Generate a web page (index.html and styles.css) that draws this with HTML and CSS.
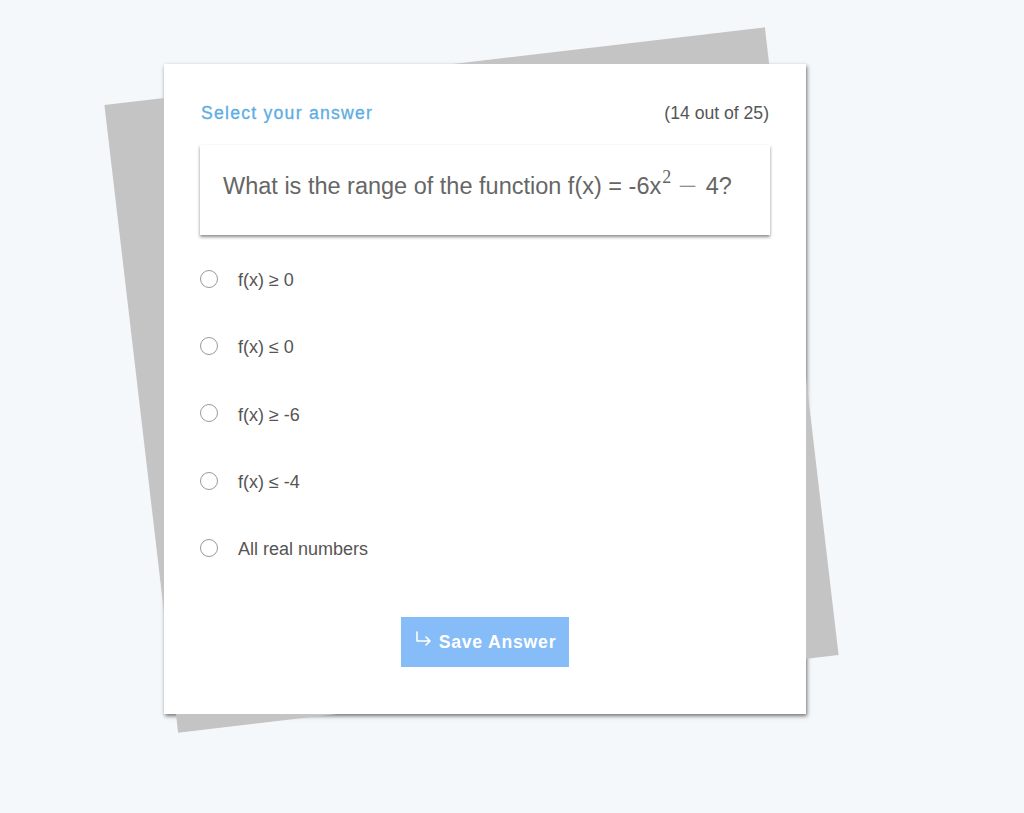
FILE: index.html
```html
<!DOCTYPE html>
<html>
<head>
<meta charset="utf-8">
<link rel="stylesheet" href="styles.css">
</head>
<body>
<div class="stage">
  <div class="card">
    <div class="head">
      <span class="title">Select your answer</span>
      <span class="count">(14 out of 25)</span>
    </div>
    <div class="question">What is the range of the function f(x) = -6x<sup class="math">2</sup><span class="minus">−</span>4?</div>
    <ul class="options">
      <li class="option"><span class="radio"></span><span>f(x) ≥ 0</span></li>
      <li class="option"><span class="radio"></span><span>f(x) ≤ 0</span></li>
      <li class="option"><span class="radio"></span><span>f(x) ≥ -6</span></li>
      <li class="option"><span class="radio"></span><span>f(x) ≤ -4</span></li>
      <li class="option"><span class="radio"></span><span>All real numbers</span></li>
    </ul>
    <div class="actions">
      <button class="save"><svg class="icon" width="19" height="17" viewBox="0 0 19 17"><path d="M3 1V10H16M12 6L16 10L12 14" fill="none" stroke="#fff" stroke-width="1.6" stroke-linecap="round" stroke-linejoin="round"/></svg><span>Save Answer</span></button>
    </div>
  </div>
</div>
</body>
</html>
```
FILE: styles.css
```css
html, body {
  margin: 0;
  padding: 0;
  background: #f5f8fb;
}
body {
  font-family: "Liberation Sans", Arial, sans-serif;
  color: #555;
  height: 813px;
  overflow: hidden;
}
.stage {
  padding: 64px 0 0 164px;
}
.card {
  position: relative;
  width: 642px;
  height: 650px;
  box-sizing: border-box;
  background: #fff;
  padding: 36px 36px 0 36px;
  box-shadow: 1px 2px 4px rgba(0,0,0,0.55);
  z-index: 1;
}
.card::before {
  content: "";
  position: absolute;
  width: 665px;
  height: 632px;
  left: -25.5px;
  top: 0;
  background: #c4c4c4;
  transform: rotate(-6.7deg);
  z-index: -1;
}
.card::after {
  content: "";
  position: absolute;
  inset: 0;
  background: #fff;
  z-index: -1;
}
.head {
  display: flex;
  justify-content: space-between;
  align-items: center;
  height: 26px;
}
.title {
  color: #5dade2;
  font-size: 17.6px;
  letter-spacing: 1.25px;
  -webkit-text-stroke: 0.3px #5dade2;
  margin-left: 1px;
}
.count {
  font-size: 17.6px;
  color: #555;
  margin-right: 1px;
}
.question {
  margin-top: 19px;
  height: 90px;
  box-sizing: border-box;
  padding: 28px 23px 0 23px;
  font-size: 23.5px;
  color: #666;
  box-shadow: 0 2px 3px rgba(0,0,0,0.45);
}
.math {
  font-family: "Liberation Serif", "Times New Roman", serif;
  font-size: 18px;
  vertical-align: 11px;
  line-height: 0;
  margin-left: 1px;
}
.minus {
  display: inline-block;
  font-family: "Liberation Serif", serif;
  margin: 0 11px 0 10px;
  font-size: 24px;
  color: #777;
  transform: scaleX(1.4);
}
.options {
  list-style: none;
  margin: 12px 0 0 0;
  padding: 0;
  display: flex;
  flex-direction: column;
}
.option {
  display: flex;
  align-items: center;
  gap: 20px;
  height: 67.3px;
  font-size: 18px;
  color: #555;
}
.radio {
  width: 16px;
  height: 16px;
  border: 1px solid #9a9a9a;
  border-radius: 50%;
  flex: none;
  position: relative;
  top: -2px;
}
.actions {
  display: flex;
  justify-content: center;
  margin-top: 34px;
}
.save {
  width: 168px;
  height: 50px;
  border: none;
  background: #86bdf8;
  color: #fff;
  font-family: "Liberation Sans", Arial, sans-serif;
  font-size: 17.6px;
  font-weight: bold;
  letter-spacing: 0.8px;
  display: flex;
  align-items: center;
  justify-content: center;
  gap: 6px;
  padding: 0;
}
.icon {
  position: relative;
  top: -3px;
}
```
